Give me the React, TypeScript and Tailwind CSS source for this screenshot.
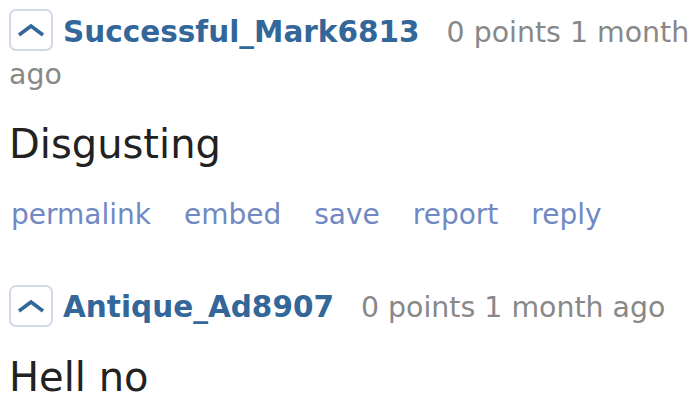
import { ReactNode } from 'react';

type Comment = { author: string; body: string; actions?: string[] };

const comments: Comment[] = [
  { author: 'Successful_Mark6813', body: 'Disgusting', actions: ['permalink', 'embed', 'save', 'report', 'reply'] },
  { author: 'Antique_Ad8907', body: 'Hell no' },
];

function UpArrow() {
  return (
    <span className="relative -top-[2px] mr-[10px] inline-flex h-[42px] w-[44px] items-center justify-center rounded-[7px] border-2 border-[#d3d9e6] align-middle">
      <svg width="28" height="14" viewBox="0 0 28 14" fill="none" stroke="#336699" strokeWidth="3.5" strokeLinecap="butt">
        <polyline points="2 12 14 3 26 12" />
      </svg>
    </span>
  );
}

function Tagline({ author }: { author: string }): ReactNode {
  // split into chunks so wrapping happens between them, like the reference
  const meta = ['0 points', '1 month', 'ago'];
  return (
    <div className="text-[28.4px] leading-[39px] text-[#888888]">
      <UpArrow />
      <span className="mr-[27px] align-middle text-[29.5px] font-bold text-[#336699]">{author}</span>
      {meta.map((m, i) => (
        <span key={m}>
          {i > 0 && ' '}
          <span className="inline-block align-middle">{m}</span>
        </span>
      ))}
    </div>
  );
}

export default function App() {
  return (
    <div className="min-h-[408px] w-[700px] bg-white pl-[9px] pt-[11px] font-['DejaVu_Sans',sans-serif]">
      {comments.map((c, i) => (
        <div key={i} className={i > 0 ? 'mt-[54px]' : ''}>
          <Tagline author={c.author} />
          <p className={`${c.actions ? 'mt-[26px]' : 'mt-[24px]'} text-[40px] leading-[48px] text-[#222222]`}>{c.body}</p>
          {c.actions && (
            <ul className="mt-[29px] flex gap-[33px] pl-[2px] text-[28px] leading-[36px] text-[#7189c3]">
              {c.actions.map(a => (
                <li key={a}>{a}</li>
              ))}
            </ul>
          )}
        </div>
      ))}
    </div>
  );
}
